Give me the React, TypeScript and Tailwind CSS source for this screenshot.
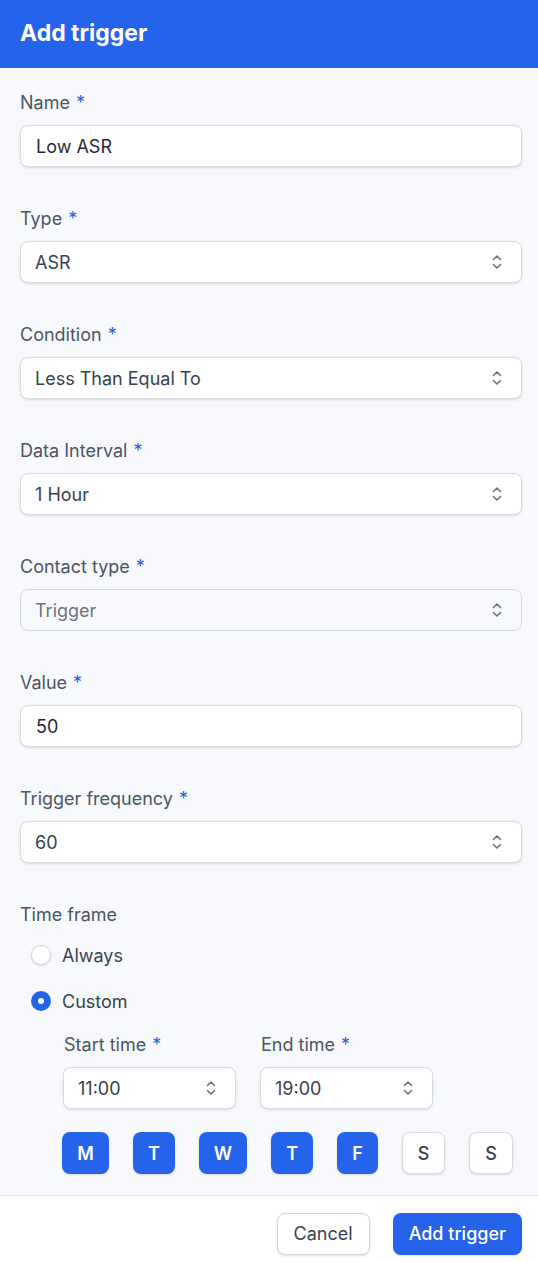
import React from "react";

const Chevrons = () => (
  <svg width="12" height="16" viewBox="0 0 12 16" fill="none" stroke="#6b7280" strokeWidth="1.6" strokeLinecap="round" strokeLinejoin="round">
    <path d="M2.5 5.5 6 2l3.5 3.5" />
    <path d="M2.5 10.5 6 14l3.5-3.5" />
  </svg>
);

const Label = ({ text, req = true }: { text: string; req?: boolean }) => (
  <div className="h-6 leading-6 text-[18px] text-[#4b5563]">
    {text}
    {req && <span className="text-[#2563eb] ml-[6px]">*</span>}
  </div>
);

const Input = ({ value }: { value: string }) => (
  <div className="mt-[10px] h-[42px] rounded-lg border border-[#d9dce1] bg-white shadow-sm flex items-center px-[15px] text-[18px] text-[#1f2937]">
    {value}
  </div>
);

const Select = ({ value, disabled = false }: { value: string; disabled?: boolean }) => (
  <div
    className={
      "mt-[10px] h-[42px] rounded-lg border flex items-center justify-between pl-[14px] pr-[18px] text-[18px] " +
      (disabled
        ? "border-[#d4d7dd] bg-[#f8f9fc] text-[#6b7280]"
        : "border-[#d9dce1] bg-white shadow-sm text-[#374151]")
    }
  >
    <span>{value}</span>
    <Chevrons />
  </div>
);

const Field = ({ label, children }: { label: string; children: React.ReactNode }) => (
  <div>
    <Label text={label} />
    {children}
  </div>
);

const Day = ({ d, on }: { d: string; on: boolean }) => (
  <div
    className={
      "h-[42px] px-[15px] rounded-lg flex items-center justify-center text-[18px] " +
      (on
        ? "bg-[#2563eb] text-white font-semibold shadow-sm"
        : "bg-white text-[#374151] border border-[#d9dce1] shadow-sm font-medium")
    }
  >
    {d}
  </div>
);

export default function App() {
  return (
    <div className="w-[538px] h-[1262px] overflow-hidden flex flex-col bg-[#f8f9fc]" style={{ fontFamily: "Inter, 'Noto Sans', sans-serif" }}>
      <div className="h-[68px] bg-[#2563eb] flex items-center px-5 shrink-0">
        <h1 className="text-[23px] font-bold text-white leading-none -mt-[2px]">Add trigger</h1>
      </div>
      <div className="flex-1 pl-5 pr-4 pt-[23px]">
        <div className="flex flex-col gap-10">
          <Field label="Name"><Input value="Low ASR" /></Field>
          <Field label="Type"><Select value="ASR" /></Field>
          <Field label="Condition"><Select value="Less Than Equal To" /></Field>
          <Field label="Data Interval"><Select value="1 Hour" /></Field>
          <Field label="Contact type"><Select value="Trigger" disabled /></Field>
          <Field label="Value"><Input value="50" /></Field>
          <Field label="Trigger frequency"><Select value="60" /></Field>
        </div>
        <div className="mt-10">
          <Label text="Time frame" req={false} />
          <div className="mt-4 pl-[11px] flex items-center h-6 gap-[11px]">
            <div className="w-5 h-5 rounded-full bg-white border border-[#d1d5db] shadow-sm" />
            <span className="text-[18px] text-[#374151]">Always</span>
          </div>
          <div className="mt-[22px] pl-[11px] flex items-center h-6 gap-[11px]">
            <div className="w-5 h-5 rounded-full bg-[#2563eb] flex items-center justify-center">
              <div className="w-[6px] h-[6px] rounded-full bg-white" />
            </div>
            <span className="text-[18px] text-[#374151]">Custom</span>
          </div>
          <div className="mt-5 pl-[43px] flex gap-6">
            <div className="w-[173px]">
              <div className="pl-[1px]"><Label text="Start time" /></div>
              <Select value="11:00" />
            </div>
            <div className="w-[173px]">
              <div className="pl-[1px]"><Label text="End time" /></div>
              <Select value="19:00" />
            </div>
          </div>
          <div className="mt-[23px] flex justify-end pr-[9px] gap-6">
            <Day d="M" on />
            <Day d="T" on />
            <Day d="W" on />
            <Day d="T" on />
            <Day d="F" on />
            <Day d="S" on={false} />
            <Day d="S" on={false} />
          </div>
        </div>
      </div>
      <div className="h-[67px] shrink-0 bg-white border-t border-[#e5e7eb] flex justify-end items-start gap-[23px] px-4 pt-[17px]">
        <button className="h-[42px] px-4 rounded-lg border border-[#d1d5db] bg-white text-lg text-[#374151] shadow-sm">Cancel</button>
        <button className="h-[42px] px-4 rounded-lg bg-[#2563eb] text-lg font-medium text-white shadow-sm">Add trigger</button>
      </div>
    </div>
  );
}
